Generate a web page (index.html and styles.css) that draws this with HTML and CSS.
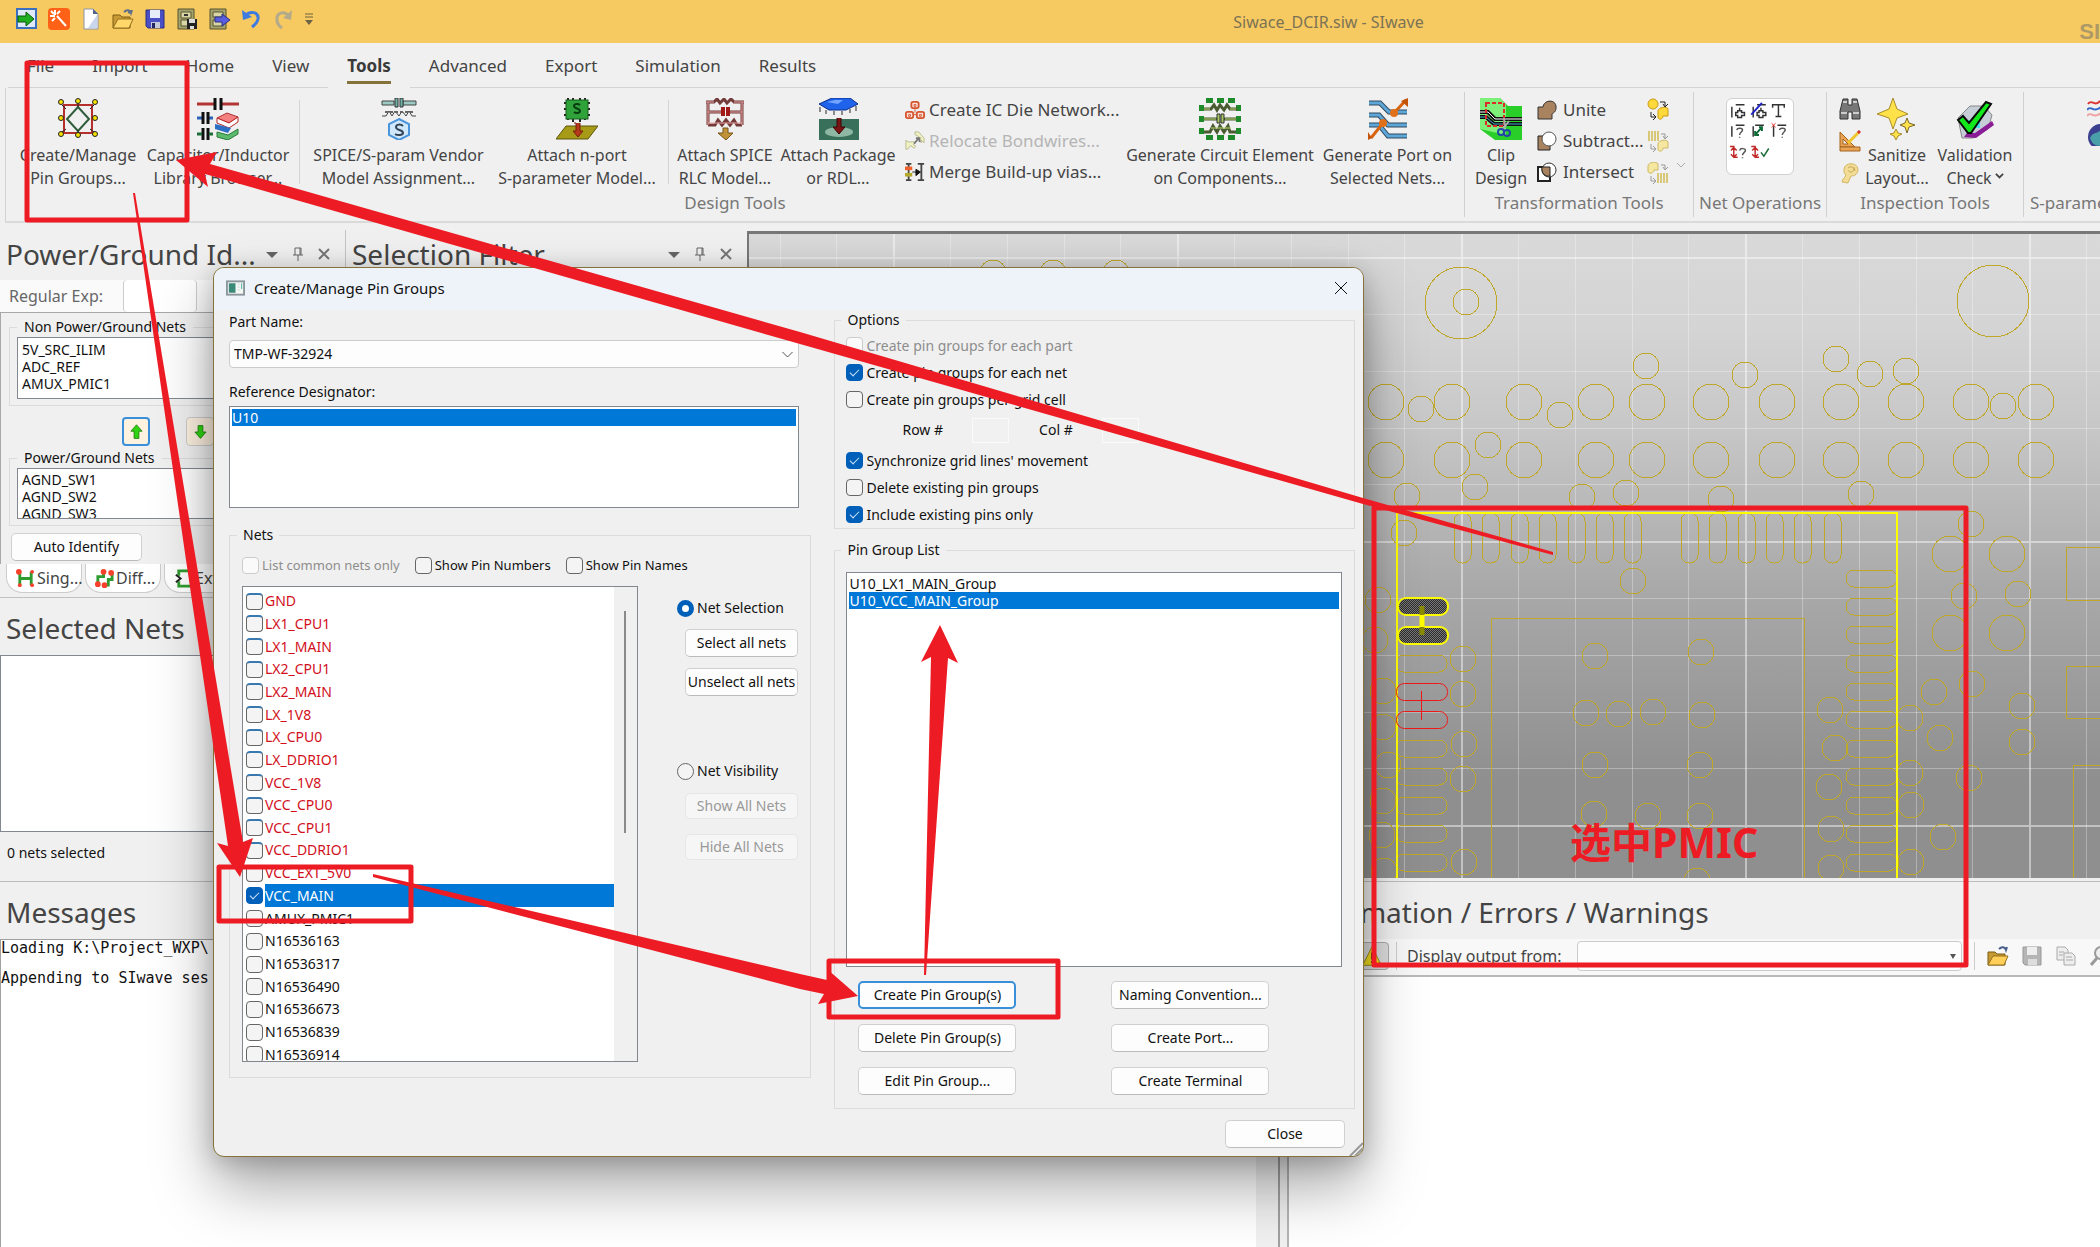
FILE: index.html
```html
<!DOCTYPE html>
<html lang="en">
<head>
<meta charset="utf-8">
<title>Siwace_DCIR.siw - SIwave</title>
<link rel="stylesheet" href="styles.css">
</head>
<body>
<header class="titlebar">
  <div class="quick">
    <button aria-label="Launch"><svg viewBox="0 0 22 22"><rect x="1" y="1" width="19" height="19" fill="#dfe9f7" stroke="#3b6fc0" stroke-width="2"/><path d="M2 8h8V4l8 7-8 7v-4H2z" fill="#1fae1f" stroke="#0b5c0b"/></svg></button>
    <button aria-label="Wizard"><svg viewBox="0 0 22 22"><rect width="22" height="22" rx="4" fill="#ff6216"/><path d="M9 8l9 10M7 2v5M2 8h5M3 3l3 3M12 3L9 6M4 13l3-3" stroke="#fff" stroke-width="2" fill="none"/></svg></button>
    <button aria-label="New"><svg viewBox="0 0 22 22"><path d="M4 1h9l5 5v15H4z" fill="#fff" stroke="#8a93a5"/><path d="M13 1v5h5z" fill="#50648c"/><path d="M17 7v13H8z" fill="#c9d6ee"/></svg></button>
    <button aria-label="Open"><svg viewBox="0 0 22 22"><path d="M1 7h7l2 2h8v11H1z" fill="#c79a35" stroke="#7d5b12"/><path d="M1 20l5-9h15l-4 9z" fill="#ffd76a" stroke="#94701f"/><path d="M12 4c3-3 6-2 7 1l1-3M19 5l-3-1" stroke="#5d6e8c" stroke-width="2" fill="none"/></svg></button>
    <button aria-label="Save"><svg viewBox="0 0 22 22"><path d="M2 2h18v18H4l-2-2z" fill="#4a4fc4" stroke="#2a2e80"/><path d="M6 2h10v8H6z" fill="#e6ecf8"/><path d="M7 14h9v6H7z" fill="#c5c9d8"/><path d="M8 15h3v5H8z" fill="#222764"/></svg></button>
    <button aria-label="Archive"><svg viewBox="0 0 22 22"><path d="M2 1h16v20H2z" fill="#a5a36d" stroke="#56552f"/><path d="M5 4h10v6H5zM5 12h10v6H5z" fill="#d8d6a5" stroke="#56552f"/><path d="M8 7h4" stroke="#333" stroke-width="2"/><path d="M11 11h10v10H11z" fill="#222"/><path d="M13 11h6v4h-6zM14 18h4v3h-4z" fill="#ddd"/></svg></button>
    <button aria-label="Restore archive"><svg viewBox="0 0 22 22"><path d="M2 1h16v20H2z" fill="#a5a36d" stroke="#56552f"/><path d="M5 4h10v5H5zM5 12h10v6H5z" fill="#d8d6a5" stroke="#56552f"/><path d="M7 9h7V6l8 6-8 6v-4H7z" fill="#5a5fe0" stroke="#2c2f86"/></svg></button>
    <button aria-label="Undo"><svg viewBox="0 0 22 22"><path d="M5 8c5-6 14-4 13 3-1 4-3 6-6 8" fill="none" stroke="#3d7be0" stroke-width="3"/><path d="M2 2l1 10 9-3z" fill="#3d7be0"/></svg></button>
    <button aria-label="Redo"><svg viewBox="0 0 22 22"><path d="M17 8c-5-6-13-3-12 4 0 4 2 6 5 8" fill="none" stroke="#b3aa8c" stroke-width="3"/><path d="M20 2l-1 10-8-2z" fill="#b3aa8c"/></svg></button>
    <button class="more" aria-label="Customize"><svg viewBox="0 0 10 12"><path d="M1 1h8M1 4h8" stroke="#6d6447"/><path d="M1 7h8l-4 5z" fill="#6d6447"/></svg></button>
  </div>
  <h1 class="doc-title">Siwace_DCIR.siw - SIwave</h1>
  <span class="brand">SI</span>
</header>

<nav class="tabs">
  <a href="#">File</a><a href="#">Import</a><a href="#">Home</a><a href="#">View</a><a href="#" class="on" aria-current="page">Tools</a><a href="#">Advanced</a><a href="#">Export</a><a href="#">Simulation</a><a href="#">Results</a>
</nav>

<section class="ribbon">
  <div class="group design">
    <div class="tools">
      <button class="big"><svg viewBox="0 0 42 42"><rect x="7" y="7" width="28" height="28" fill="none" stroke="#b5302c" stroke-width="2"/><path d="M21 9l11 12-11 12L10 21z" fill="none" stroke="#2f5c3c" stroke-width="2"/><g fill="#f5e000" stroke="#222"><circle cx="4" cy="4" r="2.500"/><circle cx="21" cy="3" r="2.500"/><circle cx="38" cy="4" r="2.500"/><circle cx="4" cy="20" r="2.500"/><circle cx="38" cy="20" r="2.500"/><circle cx="4" cy="36" r="2.500"/><circle cx="21" cy="37" r="2.500"/><circle cx="38" cy="36" r="2.500"/></g><path d="M5 7l4 4M37 7l-4 4M5 34l4-3M37 34l-4-3M21 5v4M21 35v-3" stroke="#222"/></svg><span>Create/Manage<br>Pin Groups...</span></button>
      <button class="big"><svg viewBox="0 0 42 42"><path d="M0 6h18M25 6h17" stroke="#b23434" stroke-width="3"/><path d="M18 0v12M24 0v12" stroke="#111" stroke-width="3"/><path d="M0 20h5M12 20h4" stroke="#2b63b8" stroke-width="3"/><path d="M6 14v12M11 14v12M6 30v12M11 30v12" stroke="#111" stroke-width="3"/><path d="M0 36h5M12 36h4" stroke="#1d6e3a" stroke-width="3"/><path d="M20 20l10-5 11 4-9 6z" fill="#f58080" stroke="#a33"/><path d="M20 20v5l12 5 9-6v-5l-9 6z" fill="#fff" stroke="#b22"/><path d="M18 26v5l13 4 3-5z" fill="#2e6fc6"/><path d="M20 34l11 3 10-6v5l-10 6-11-3z" fill="#5cba6b" stroke="#2b7a3a"/></svg><span>Capacitor/Inductor<br>Library Browser...</span></button>
      <i class="sep"></i>
      <button class="big"><svg viewBox="0 0 34 42"><path d="M0 3h12v4H0zM21 3h13v4H21z" fill="#9ccbc4" stroke="#444"/><path d="M13 0h3v9h-3zM18 0h3v9h-3z" fill="#6fb5a8" stroke="#333"/><path d="M0 18h4l3-5 3 5 3-5 4 5 3-5 4 5 3-5 3 5h4" stroke="#444" fill="none"/><path d="M3 14h28" stroke="#666" stroke-width="2" stroke-dasharray="3 2"/><path d="M17 21l10 5v11l-10 5-10-5V26z" fill="#cfe8fc" stroke="#4a94dc" stroke-width="2"/><path d="M21 28c-2-2-7-2-7 1 0 4 7 2 7 6 0 2-5 3-8 1" fill="none" stroke="#345" stroke-width="2"/></svg><span>SPICE/S-param Vendor<br>Model Assignment...</span></button>
      <button class="big"><svg viewBox="0 0 42 42"><path d="M12 0v22M17 0v24M24 0v24M29 0v22M8 5h26M8 11h26M8 17h26" stroke="#222" stroke-width="2"/><rect x="10" y="2" width="22" height="19" fill="#2fa33a" stroke="#155d1d"/><path d="M24 7c-2-2-6-1-6 1 0 3 6 2 6 5 0 2-4 3-6 1" fill="none" stroke="#0b3d12" stroke-width="2"/><path d="M10 28h32l-10 13H0z" fill="#a79a17" stroke="#5d560d"/><path d="M18 25h2v8h-3l5 6 5-6h-3v-8" fill="#b5391b" stroke="#7a1f0c"/></svg><span>Attach n-port<br>S-parameter Model...</span></button>
      <i class="sep"></i>
      <button class="big"><svg viewBox="0 0 42 42"><g fill="none" stroke="#733a3a" stroke-width="3"><path d="M2 4h8l3-3 3 4 4-4 3 4 4-4 3 3h10M4 4v23M38 4v23M4 14h14M25 14h13M4 27h7l3-5 4 5 4-5 4 5 4-5 3 5h5"/></g><g fill="none" stroke="#eba5a5"><path d="M2 4h8M30 4h10M4 4v23M38 4v23M4 14h14M25 14h13M4 25h34"/></g><path d="M19 9v9M24 9v9" stroke="#a01818" stroke-width="4"/><path d="M19 30v5h-5l8 7 7-7h-5v-5z" fill="#c09137" stroke="#75551a"/></svg><span>Attach SPICE<br>RLC Model...</span></button>
      <button class="big"><svg viewBox="0 0 42 42"><path d="M2 21h40v21H2z" fill="#39705c"/><ellipse cx="22" cy="34" rx="14" ry="5" fill="#8fb8a4"/><path d="M2 6l13-6h18l8 6-12 6H12z" fill="#1f63ea" stroke="#0b2e8c"/><path d="M10 4l8-2h8l-5 4z" fill="#73a5ff"/><path d="M3 9v5M9 12v4M17 13v4M25 13v4M33 11v4M39 8v5" stroke="#8b8b8b" stroke-width="2"/><path d="M20 20v9h-4l6 7 6-7h-4v-9" fill="#7b1414" stroke="#3c0505"/></svg><span>Attach Package<br>or RDL...</span></button>
      <div class="stack">
        <button class="row"><svg viewBox="0 0 22 20"><g fill="#fbe3da" stroke="#d6552f" stroke-width="2"><rect x="7" y="1" width="8" height="7" rx="2"/><rect x="1" y="12" width="8" height="7" rx="2"/><rect x="13" y="12" width="8" height="7" rx="2"/></g><path d="M11 8v5M9 15h4M10 4h2v2h-2zM4 15h2v2H4zM16 15h2v2h-2z" fill="none" stroke="#d6552f"/></svg>Create IC Die Network...</button>
        <button class="row" disabled><svg viewBox="0 0 22 22"><path d="M11 1h4l6 7v5l-3-3v3l-3-3v-4l-4-2z" fill="#f1f2c4" stroke="#b6b88c"/><path d="M1 10l2 2h9l-3 3 3 2-2 2-4-3-3 4H1z" fill="#f1f2c4" stroke="#b6b88c"/><path d="M10 14l5-6M12 8h4v4" fill="none" stroke="#777" stroke-width="2"/></svg>Relocate Bondwires...</button>
        <button class="row"><svg viewBox="0 0 22 20"><path d="M1 1h6M1 19h6M4 1v18M14 1h7M14 19h7M18 1v18" stroke="#444" stroke-width="2"/><path d="M0 6h8" stroke="#f0602d" stroke-width="4"/><path d="M0 13h8" stroke="#b4a92a" stroke-width="4"/><path d="M8 10h4V7l5 3-5 4v-4" fill="#111" stroke="#111"/></svg>Merge Build-up vias...</button>
      </div>
      <button class="big"><svg viewBox="0 0 42 42"><g fill="#1f8a2a"><path d="M7 0h7v5H7zM18 0h7v5h-7zM29 0h7v5h-7zM7 37h7v5H7zM18 37h7v5h-7zM29 37h7v5h-7zM0 7h5v6H0zM37 7h5v6h-5zM0 18h5v6H0zM37 18h5v6h-5zM0 30h5v6H0zM37 30h5v6h-5z"/></g><path d="M5 11h7l3-4 3 5 3-5 4 5 3-5 3 4h7M5 21h13M25 21h12M5 34h6l3-6 4 6 3-6 4 6 4-6 2 6h6" fill="none" stroke="#4a5b32" stroke-width="3"/><path d="M5 11h6M31 11h6M5 21h12M26 21h11M12 30h20" fill="none" stroke="#b9d96f"/><path d="M18 16h3v9h-3zM22 16h3v9h-3z" fill="#a5c765" stroke="#333"/></svg><span>Generate Circuit Element<br>on Components...</span></button>
      <button class="big"><svg viewBox="0 0 42 42"><g fill="none" stroke="#33495e" stroke-width="5"><path d="M2 5h11l9 9h18M2 17h10l9 10h19M2 27h10l9 11h19"/></g><g fill="none" stroke="#5da7d8" stroke-width="3"><path d="M2 5h11l9 9h18M2 17h10l9 10h19M2 27h10l9 11h19"/></g><path d="M27 15L39 2M16 25L4 40" stroke="#d9640f" stroke-width="3"/><circle cx="27" cy="15" r="4" fill="#e0701a"/><circle cx="16" cy="25" r="4" fill="#e0701a"/><path d="M34 3l7-3v9zM1 34v8l4-2z" fill="#c3540a"/></svg><span>Generate Port on<br>Selected Nets...</span></button>
    </div>
    <h2>Design Tools</h2>
  </div>
  <div class="group transform">
    <div class="tools">
      <button class="big"><svg viewBox="0 0 42 42"><path d="M0 0h20l8 8h14v34H15L0 31z" fill="#29cf28"/><path d="M0 0h20l6 7v30L0 31z" fill="#7ef07a"/><path d="M0 14h8l7 7h27M0 19h6l8 7h28" stroke="#111" stroke-width="4" fill="none"/><path d="M0 14h8l7 7h27" stroke="#fff" fill="none"/><path d="M0 19h6l8 7h28" stroke="#3fa8c8" fill="none"/><path d="M6 5h18v23H6z" fill="none" stroke="#e02a2a" stroke-width="2" stroke-dasharray="4 2"/><path d="M24 20l1 10M29 23l-6 8" stroke="#aaa" stroke-width="2"/><circle cx="21" cy="34" r="3" fill="none" stroke="#2344a8" stroke-width="2"/><circle cx="27" cy="35" r="3" fill="none" stroke="#2344a8" stroke-width="2"/></svg><span>Clip<br>Design</span></button>
      <div class="stack">
        <button class="row"><svg viewBox="0 0 20 20"><path d="M1 7h5c1-8 14-8 13 1 0 4-3 5-4 6v5H1z" fill="#a9825f" stroke="#333"/></svg>Unite</button>
        <button class="row"><svg viewBox="0 0 20 20"><path d="M1 5h12v14H1z" fill="#a9825f" stroke="#222"/><circle cx="12" cy="8" r="7" fill="#fff" stroke="#555"/></svg>Subtract...</button>
        <button class="row"><svg viewBox="0 0 20 20"><path d="M1 5h12v14H1z" fill="#fff" stroke="#222" stroke-width="2"/><circle cx="12" cy="8" r="7" fill="#fff" stroke="#333"/><path d="M5 5h8v9c-5 1-9-3-8-9" fill="#a9825f" stroke="#222"/></svg>Intersect</button>
      </div>
      <div class="stack icons">
        <button aria-label="Circle to polygon"><svg viewBox="0 0 22 22"><circle cx="6" cy="6" r="5" fill="#ffd83b" stroke="#c99a12"/><path d="M11 13c0-4 9-5 10-2v7h-5c0 4-5 4-5 1z" fill="#ffd83b" stroke="#c99a12"/><path d="M13 4h5v4M16 6l2 3 3-3M4 14v5h4M6 16l3 3-3 3" fill="none" stroke="#222"/></svg></button>
        <button aria-label="Trace to polygon" disabled><svg viewBox="0 0 22 22"><path d="M2 1v10M5 1v10M8 1v10M11 1v10" stroke="#d8c777" stroke-width="2"/><path d="M11 14c0-4 9-5 10-2v6h-5c0 4-5 4-5 1z" fill="#f5e6a0" stroke="#cdb965"/><path d="M14 4h4v4M16 6l2 3 3-3M4 14v5h4M6 16l3 3-3 3" fill="none" stroke="#999"/></svg></button>
        <button aria-label="Polygon to trace" disabled><svg viewBox="0 0 22 22"><path d="M1 4c0-4 9-5 10-2v6H7c0 4-6 4-6 1z" fill="#f5e6a0" stroke="#cdb965"/><path d="M11 11v10M14 11v10M17 11v10M20 11v10" stroke="#d8c777" stroke-width="2"/><path d="M14 3h4v4M16 5l2 3 3-3M4 14v5h4M6 16l3 3-3 3" fill="none" stroke="#999"/></svg></button>
      </div>
      <button class="drop" aria-label="More" disabled><svg viewBox="0 0 10 10"><path d="M1 3l4 4 4-4" fill="none" stroke="#aaa"/></svg></button>
    </div>
    <h2>Transformation Tools</h2>
  </div>
  <div class="group netops">
    <div class="tools">
      <button class="gallery" aria-label="Net operations"><svg viewBox="0 0 68 77"><g fill="none" stroke="#333" stroke-width="1.500"><path d="M5 8v11M9 6h9M13 9v3M11 12h4v2h3v3h-3v2h-4v-2H9v-3h2zM27 8v11M31 6h9M35 9v3M33 12h4v2h3v3h-3v2h-4v-2h-2v-3h2z"/><path d="M47 9V6h12v3M53 6v12M50 18h6"/><path d="M5 28v11M9 27h9M27 28v11M29 27h9M48 28v11M52 27h9"/></g><path d="M10 32c1-3 6-2 6 0s-3 2-3 5M13 39v1M54 32c1-3 6-2 6 0s-3 2-3 5M57 39v1M13 53c1-3 6-2 6 0s-3 2-3 5M16 60v1" fill="none" stroke="#555" stroke-width="1.500"/><path d="M25 16L36 4" stroke="#22c" stroke-width="2"/><path d="M29 37l7-8M29 33v4h4M33 29h3v4" stroke="#0a6b35" stroke-width="2" fill="none"/><path d="M46 25l4 4M50 25l-4 4" stroke="#d22"/><path d="M3 49h4v11h4M25 49h4v11h4M4 53l3-3 3 3M4 57l3 3 3-3M26 53l3-3 3 3M26 57l3 3 3-3" fill="none" stroke="#c22a2a" stroke-width="1.500"/><path d="M35 55l3 4 5-8" fill="none" stroke="#1a6b35" stroke-width="1.500"/></svg></button>
    </div>
    <h2>Net Operations</h2>
  </div>
  <div class="group inspect">
    <div class="tools">
      <div class="stack icons">
        <button aria-label="Find"><svg viewBox="0 0 22 22"><path d="M4 1h5v6h4V1h5l3 12v8h-8v-7H9v7H1v-8z" fill="#777" stroke="#333"/><path d="M2 15h6M14 15h6M4 4h4M14 4h4" stroke="#ccc" stroke-width="2"/></svg></button>
        <button aria-label="Measure"><svg viewBox="0 0 22 22"><path d="M1 2v15h15zM4 9l5 5H4z" fill="#e8a355" fill-rule="evenodd" stroke="#a5631f"/><path d="M1 17h20v4H1z" fill="#e8a355" stroke="#a5631f"/><path d="M9 13L20 2" stroke="#f0c62c" stroke-width="3"/><path d="M19 3l2-2" stroke="#c33" stroke-width="3"/></svg></button>
        <button aria-label="Note"><svg viewBox="0 0 22 22"><path d="M5 7C6 0 18 0 19 7c0 5-3 7-7 7l-3 7-6-1c0-3 3-4 4-7-2-1-2-3-2-6z" fill="#f3dc95" stroke="#d3b767"/><path d="M9 6c3-3 7 0 5 3-2 2-4 1-5-1M15 5l1 4" fill="none" stroke="#c3a658"/></svg></button>
      </div>
      <button class="big"><svg viewBox="0 0 42 42"><path d="M17 0l4 11 11 5-11 4-4 11-4-11-12-4 12-5z" fill="#ffe14a" stroke="#a98d2c"/><path d="M31 20l2 5 6 2-6 2-2 6-2-6-5-2 5-2z" fill="#ffe14a" stroke="#7d6a2b"/><path d="M20 31l2 4 4 1-4 2-2 4-2-4-4-2 4-1z" fill="#ffe14a" stroke="#a98d2c"/></svg><span>Sanitize<br>Layout...</span></button>
      <button class="big"><svg viewBox="0 0 42 42"><path d="M4 20l12-12h14l8 9-4 14-15 9H8z" fill="#c7cdd6" stroke="#888"/><path d="M38 23l2 4-18 13-12-1 3-4h8z" fill="#8a1c96"/><path d="M12 22h14v8H12z" fill="#49e0ee"/><path d="M4 22l5-4 6 7L32 4l5 2-20 29h-3z" fill="#12e81b" stroke="#0a0a0a" stroke-width="2"/></svg><span>Validation<br>Check<svg class="chev" viewBox="0 0 10 10"><path d="M1 2l4 4 4-4" fill="none" stroke="#444" stroke-width="2"/></svg></span></button>
    </div>
    <h2>Inspection Tools</h2>
  </div>
  <div class="group sparam">
    <div class="tools">
      <svg viewBox="0 0 14 48"><path d="M1 6c4-6 6 4 12-3" stroke="#d33" stroke-width="2" fill="none"/><path d="M0 12c4-6 6 4 14-3" stroke="#36c" stroke-width="2" fill="none"/><path d="M0 18c4-6 6 4 14-3" stroke="#f0a0a0" stroke-width="2" fill="none"/><circle cx="14" cy="39" r="13" fill="#3b3f8f"/><path d="M3 40c3-7 8-3 11-9v17C8 48 5 46 3 40" fill="#49a0a8"/></svg>
    </div>
    <h2>S-parameters</h2>
  </div>
</section>

<main class="work">
  <div class="docks">
    <div class="dock-row">
      <section class="panel ident">
        <header class="caption"><h2>Power/Ground Id...</h2><span class="ctl"><svg viewBox="0 0 12 14"><path d="M0 5h12l-6 6z" fill="#666"/></svg><svg viewBox="0 0 12 14"><path d="M3 1h6v7M3 1v7M1 8h10M6 8v6M8 1v7" fill="none" stroke="#666"/></svg><svg viewBox="0 0 12 14"><path d="M1 2l10 10M11 2L1 12" stroke="#777" stroke-width="2"/></svg></span></header>
        <div class="regexp"><label for="re">Regular Exp:</label><input id="re" type="text"></div>
        <div class="ident-body">
          <fieldset><legend>Non Power/Ground Nets</legend><ul class="list nets-a"><li>5V_SRC_ILIM</li><li>ADC_REF</li><li>AMUX_PMIC1</li></ul></fieldset>
          <div class="move"><button class="focus" aria-label="Move up"><svg viewBox="0 0 16 20"><path d="M8 1l7 8h-4v9H5V9H1z" fill="#2fd312" stroke="#187a0a"/></svg></button><button aria-label="Move down"><svg viewBox="0 0 16 20"><path d="M8 18l7-8h-4V2H5v8H1z" fill="#2fd312" stroke="#187a0a"/></svg></button></div>
          <fieldset><legend>Power/Ground Nets</legend><ul class="list nets-b"><li>AGND_SW1</li><li>AGND_SW2</li><li>AGND_SW3</li></ul></fieldset>
          <button class="btn auto">Auto Identify</button>
        </div>
        <div class="dock-tabs">
          <a href="#"><svg viewBox="0 0 20 20"><path d="M4 2v15M4 10h12M16 3v14" stroke="#2e9b2e" stroke-width="3" fill="none"/><g fill="#f5402c"><circle cx="3" cy="3" r="3"/><circle cx="4" cy="17" r="2"/><circle cx="17" cy="3" r="2"/><circle cx="17" cy="17" r="2"/></g></svg>Sing...</a>
          <a href="#"><svg viewBox="0 0 20 20"><path d="M3 16V8h6V3M9 17h5v-6h4V4" stroke="#2e9b2e" stroke-width="3" fill="none"/><g fill="#f5402c"><circle cx="9" cy="3" r="3"/><circle cx="17" cy="4" r="3"/><circle cx="3" cy="16" r="3"/><circle cx="10" cy="17" r="3"/></g></svg>Diff...</a>
          <a href="#"><svg viewBox="0 0 20 20"><path d="M18 2H5v5M5 13v5h13" stroke="#2e9b2e" stroke-width="3" fill="none"/><path d="M2 6l5 4-5 4" stroke="#222" stroke-width="2" fill="none"/></svg>Ext...</a>
        </div>
      </section>
      <section class="panel filter">
        <header class="caption"><h2>Selection Filter</h2><span class="ctl"><svg viewBox="0 0 12 14"><path d="M0 5h12l-6 6z" fill="#666"/></svg><svg viewBox="0 0 12 14"><path d="M3 1h6v7M3 1v7M1 8h10M6 8v6M8 1v7" fill="none" stroke="#666"/></svg><svg viewBox="0 0 12 14"><path d="M1 2l10 10M11 2L1 12" stroke="#777" stroke-width="2"/></svg></span></header>
      </section>
    </div>
    <section class="panel selected">
      <h2 class="plain">Selected Nets</h2>
      <div class="sel-list"></div>
      <p class="count">0 nets selected</p>
    </section>
  </div>
  <section class="canvas">
    <svg viewBox="749 234 1351 644" preserveAspectRatio="xMinYMin slice">
      <defs>
        <linearGradient id="bg" x1="0" y1="0" x2="0" y2="1"><stop offset="0" stop-color="#d9d9d9"/><stop offset=".15" stop-color="#d4d4d4"/><stop offset=".3" stop-color="#c7c7c7"/><stop offset=".55" stop-color="#a9a9a9"/><stop offset=".85" stop-color="#8f8f8f"/><stop offset="1" stop-color="#8f8f8f"/></linearGradient>
        <pattern id="grid" x="1461" y="257" width="284" height="284" patternUnits="userSpaceOnUse"><path d="M57.500 0v284M114.500 0v284M171.500 0v284M227.500 0v284M0 57.500h284M0 114.500h284M0 171.500h284M0 227.500h284" stroke="#fff" stroke-opacity=".3"/><path d="M1 0v284M0 1h284" stroke="#fff" stroke-opacity=".45" stroke-width="2"/></pattern>
        <pattern id="hatch" width="2" height="2" patternUnits="userSpaceOnUse"><path d="M0 0h2v2H0z" fill="#2c2c2c"/><path d="M0 0h1v1H0zM1 1h1v1H1z" fill="#777"/></pattern>
      </defs>
      <path d="M749 234h3000v644H749z" fill="url(#bg)"/>
      <path d="M749 234h3000v644H749z" fill="url(#grid)"/>
      <g class="pad">
        <circle cx="1461" cy="303" r="36"/><circle cx="1466" cy="302" r="13"/><circle cx="1993" cy="301" r="36"/>
        <circle cx="993" cy="273" r="13"/><circle cx="1053" cy="273" r="13"/><circle cx="1116" cy="273" r="13"/>
        <circle cx="1386" cy="402" r="18"/><circle cx="1452" cy="402" r="18"/><circle cx="1524" cy="402" r="18"/><circle cx="1596" cy="402" r="18"/><circle cx="1647" cy="402" r="18"/><circle cx="1711" cy="402" r="18"/><circle cx="1777" cy="402" r="18"/><circle cx="1841" cy="402" r="18"/><circle cx="1906" cy="402" r="18"/><circle cx="1971" cy="402" r="18"/><circle cx="2036" cy="402" r="18"/>
        <circle cx="1386" cy="460" r="18"/><circle cx="1452" cy="460" r="18"/><circle cx="1524" cy="460" r="18"/><circle cx="1596" cy="460" r="18"/><circle cx="1647" cy="460" r="18"/><circle cx="1711" cy="460" r="18"/><circle cx="1777" cy="460" r="18"/><circle cx="1841" cy="460" r="18"/><circle cx="1906" cy="460" r="18"/><circle cx="1971" cy="460" r="18"/><circle cx="2036" cy="460" r="18"/>
        <circle cx="1950" cy="554" r="18"/><circle cx="2007" cy="554" r="18"/><circle cx="1950" cy="633" r="18"/><circle cx="2007" cy="633" r="18"/>
        <circle cx="1421" cy="409" r="13"/><circle cx="1560" cy="415" r="13"/><circle cx="2003" cy="406" r="13"/><circle cx="1646" cy="366" r="13"/><circle cx="1745" cy="375" r="13"/><circle cx="1836" cy="359" r="13"/><circle cx="1870" cy="374" r="13"/><circle cx="1906" cy="371" r="13"/><circle cx="1488" cy="445" r="13"/><circle cx="1475" cy="487" r="13"/><circle cx="1407" cy="496" r="13"/><circle cx="1582" cy="497" r="13"/><circle cx="1626" cy="493" r="13"/><circle cx="1721" cy="499" r="13"/><circle cx="1861" cy="494" r="13"/><circle cx="1404" cy="533" r="13"/><circle cx="1633" cy="581" r="13"/><circle cx="1378" cy="600" r="13"/><circle cx="1971" cy="524" r="13"/><circle cx="1964" cy="596" r="13"/><circle cx="2018" cy="594" r="13"/>
        <circle cx="1375" cy="640" r="13"/><circle cx="1463" cy="659" r="13"/><circle cx="1463" cy="694" r="13"/><circle cx="1383" cy="691" r="13"/><circle cx="1383" cy="727" r="13"/><circle cx="1464" cy="744" r="13"/><circle cx="1463" cy="779" r="13"/><circle cx="1388" cy="765" r="13"/><circle cx="1383" cy="801" r="13"/><circle cx="1382" cy="835" r="13"/><circle cx="1464" cy="862" r="13"/><circle cx="1384" cy="871" r="13"/>
        <circle cx="1595" cy="656" r="13"/><circle cx="1701" cy="652" r="13"/><circle cx="1586" cy="713" r="13"/><circle cx="1619" cy="714" r="13"/><circle cx="1653" cy="712" r="13"/><circle cx="1702" cy="715" r="13"/><circle cx="1595" cy="765" r="13"/><circle cx="1700" cy="765" r="13"/><circle cx="1594" cy="814" r="13"/><circle cx="1648" cy="816" r="13"/><circle cx="1700" cy="816" r="13"/><circle cx="1697" cy="881" r="13"/>
        <circle cx="1830" cy="710" r="13"/><circle cx="1835" cy="748" r="13"/><circle cx="1829" cy="787" r="13"/><circle cx="1831" cy="829" r="13"/><circle cx="1831" cy="868" r="13"/><circle cx="1910" cy="718" r="13"/><circle cx="1910" cy="773" r="13"/><circle cx="1911" cy="805" r="13"/><circle cx="1911" cy="862" r="13"/><circle cx="1934" cy="692" r="13"/><circle cx="1940" cy="738" r="13"/><circle cx="1972" cy="684" r="13"/><circle cx="2022" cy="706" r="13"/><circle cx="2022" cy="742" r="13"/><circle cx="1969" cy="778" r="13"/><circle cx="1943" cy="837" r="13"/>
        <rect x="1454" y="513" width="17" height="50" rx="8"/><rect x="1482" y="513" width="17" height="50" rx="8"/><rect x="1511" y="513" width="17" height="50" rx="8"/><rect x="1539" y="513" width="17" height="50" rx="8"/><rect x="1568" y="513" width="17" height="50" rx="8"/><rect x="1596" y="513" width="17" height="50" rx="8"/><rect x="1624" y="513" width="17" height="50" rx="8"/><rect x="1681" y="513" width="17" height="50" rx="8"/><rect x="1709" y="513" width="17" height="50" rx="8"/><rect x="1738" y="513" width="17" height="50" rx="8"/><rect x="1766" y="513" width="17" height="50" rx="8"/><rect x="1794" y="513" width="17" height="50" rx="8"/><rect x="1824" y="513" width="17" height="50" rx="8"/>
        <rect x="1846" y="570" width="51" height="17" rx="8"/><rect x="1846" y="598" width="51" height="17" rx="8"/><rect x="1846" y="626" width="51" height="17" rx="8"/><rect x="1846" y="655" width="51" height="17" rx="8"/><rect x="1846" y="683" width="51" height="17" rx="8"/><rect x="1846" y="711" width="51" height="17" rx="8"/><rect x="1846" y="740" width="51" height="17" rx="8"/><rect x="1846" y="768" width="51" height="17" rx="8"/><rect x="1846" y="797" width="51" height="17" rx="8"/><rect x="1846" y="825" width="51" height="17" rx="8"/><rect x="1846" y="854" width="51" height="17" rx="8"/>
        <rect x="1396" y="655" width="51" height="17" rx="8"/><rect x="1396" y="740" width="51" height="17" rx="8"/><rect x="1396" y="768" width="51" height="17" rx="8"/><rect x="1396" y="797" width="51" height="17" rx="8"/><rect x="1396" y="825" width="51" height="17" rx="8"/><rect x="1396" y="854" width="51" height="17" rx="8"/>
        <path d="M1491 880V618h313v262M2200 547.500H2066.500v53H2200M2200 666.500H2066.500v52H2200M2200 765.500H2073V880"/>
      </g>
      <path d="M1397 880V513H1897v367" fill="none" stroke="#ff0" stroke-width="2"/>
      <g fill="url(#hatch)" stroke="#ff0" stroke-width="2"><rect x="1398" y="598" width="50" height="17" rx="8"/><rect x="1398" y="627" width="50" height="17" rx="8"/></g>
      <path d="M1422 615v12" stroke="#ff0" stroke-width="5"/><path d="M1422 606v9M1422 627v8" stroke="#8b8b00" stroke-width="5"/>
      <g fill="none" stroke="#f01818"><rect x="1396.500" y="683.500" width="51" height="17" rx="8"/><rect x="1396.500" y="711.500" width="51" height="17" rx="8"/><path d="M1421.500 691v29"/></g>
    </svg>
  </section>
</main>

<section class="output">
  <section class="messages">
    <h2 class="plain">Messages</h2>
    <div class="log"><pre>Loading K:\Project_WXP\

Appending to SIwave ses</pre><i class="track"></i></div>
  </section>
  <section class="errors">
    <h2 class="plain">Information / Errors / Warnings</h2>
    <div class="outbar">
      <button class="warn" aria-label="Warnings"><svg viewBox="0 0 26 26"><path d="M13 2l11 22H2z" fill="#f4e01c" stroke="#8a7d10"/><path d="M13 9v8M13 19v2" stroke="#222" stroke-width="2"/></svg></button>
      <i class="vline"></i>
      <label for="from">Display output from:</label>
      <span class="combo"><select id="from"><option></option></select><svg viewBox="0 0 8 6"><path d="M1 0h6L4 5z" fill="#555"/></svg></span>
      <i class="vline"></i>
      <button aria-label="Open"><svg viewBox="0 0 22 22"><path d="M1 7h7l2 2h8v11H1z" fill="#c79a35" stroke="#7d5b12"/><path d="M1 20l5-9h15l-4 9z" fill="#ffcf5a" stroke="#94701f"/><path d="M12 4c3-3 6-2 7 1l1-3" stroke="#49608c" stroke-width="2" fill="none"/></svg></button>
      <button aria-label="Save" disabled><svg viewBox="0 0 22 22"><path d="M2 2h18v18H4l-2-2z" fill="#b5b5b5" stroke="#999"/><path d="M6 2h10v8H6z" fill="#eee"/><path d="M7 14h9v6H7z" fill="#ddd"/></svg></button>
      <button aria-label="Copy" disabled><svg viewBox="0 0 22 22"><path d="M2 2h8l3 3v10H2z" fill="#eee" stroke="#aaa"/><path d="M9 8h8l3 3v9H9z" fill="#eee" stroke="#aaa"/><path d="M11 12h6M11 15h7M4 7h5M4 10h4" stroke="#aaa"/></svg></button>
      <button aria-label="Find" disabled><svg viewBox="0 0 22 22"><circle cx="12" cy="8" r="6" fill="#eee" stroke="#999" stroke-width="2"/><path d="M8 13l-6 7" stroke="#999" stroke-width="3"/></svg></button>
    </div>
    <div class="outbody"></div>
  </section>
</section>

<div class="dialog" role="dialog" aria-labelledby="dlg-title">
  <header><svg viewBox="0 0 20 16"><rect x="1" y="1" width="18" height="14" fill="#f5f7f5" stroke="#8c979c" stroke-width="2"/><path d="M3 3h7v10H3z" fill="#3b8a78"/><path d="M12 4h3M12 7h3M12 10h3" stroke="#cdd"/><path d="M16 3h1v6h-1z" fill="#4ab0a0"/></svg><h2 id="dlg-title">Create/Manage Pin Groups</h2><button aria-label="Close dialog"><svg viewBox="0 0 14 14"><path d="M1 1l12 12M13 1L1 13" stroke="#111"/></svg></button></header>
  <div class="cols">
    <div class="left">
      <label class="lab" for="part">Part Name:</label>
      <span class="combo part"><select id="part"><option>TMP-WF-32924</option></select><svg viewBox="0 0 12 8"><path d="M1 1l5 5 5-5" fill="none" stroke="#555"/></svg></span>
      <span class="lab ref">Reference Designator:</span>
      <ul class="list refs" role="listbox" aria-label="Reference Designator"><li class="sel" role="option">U10</li></ul>
      <fieldset class="nets"><legend>Nets</legend>
        <div class="checks"><label class="off"><input type="checkbox" disabled>List common nets only</label><label><input type="checkbox">Show Pin Numbers</label><label><input type="checkbox">Show Pin Names</label></div>
        <div class="nets-body">
          <div class="netbox"><div class="netlist">
            <label class="red"><input type="checkbox"><span>GND</span></label>
            <label class="red"><input type="checkbox"><span>LX1_CPU1</span></label>
            <label class="red"><input type="checkbox"><span>LX1_MAIN</span></label>
            <label class="red"><input type="checkbox"><span>LX2_CPU1</span></label>
            <label class="red"><input type="checkbox"><span>LX2_MAIN</span></label>
            <label class="red"><input type="checkbox"><span>LX_1V8</span></label>
            <label class="red"><input type="checkbox"><span>LX_CPU0</span></label>
            <label class="red"><input type="checkbox"><span>LX_DDRIO1</span></label>
            <label class="red"><input type="checkbox"><span>VCC_1V8</span></label>
            <label class="red"><input type="checkbox"><span>VCC_CPU0</span></label>
            <label class="red"><input type="checkbox"><span>VCC_CPU1</span></label>
            <label class="red"><input type="checkbox"><span>VCC_DDRIO1</span></label>
            <label class="red"><input type="checkbox"><span>VCC_EXT_5V0</span></label>
            <label class="sel"><input type="checkbox" checked><span>VCC_MAIN</span></label>
            <label><input type="checkbox"><span>AMUX_PMIC1</span></label>
            <label><input type="checkbox"><span>N16536163</span></label>
            <label><input type="checkbox"><span>N16536317</span></label>
            <label><input type="checkbox"><span>N16536490</span></label>
            <label><input type="checkbox"><span>N16536673</span></label>
            <label><input type="checkbox"><span>N16536839</span></label>
            <label><input type="checkbox"><span>N16536914</span></label>
          </div><div class="scroll"><i></i></div></div>
          <div class="modes">
            <label><input type="radio" name="mode" checked>Net Selection</label>
            <button class="btn">Select all nets</button>
            <button class="btn">Unselect all nets</button>
            <label class="second"><input type="radio" name="mode">Net Visibility</label>
            <button class="btn" disabled>Show All Nets</button>
            <button class="btn" disabled>Hide All Nets</button>
          </div>
        </div>
      </fieldset>
    </div>
    <div class="right">
      <fieldset class="options"><legend>Options</legend>
        <label class="off"><input type="checkbox" disabled>Create pin groups for each part</label>
        <label><input type="checkbox" checked>Create pin groups for each net</label>
        <label><input type="checkbox">Create pin groups per grid cell</label>
        <div class="cells"><label for="row">Row #</label><input id="row" type="text" disabled><label for="col">Col #</label><input id="col" type="text" disabled></div>
        <label><input type="checkbox" checked>Synchronize grid lines' movement</label>
        <label><input type="checkbox">Delete existing pin groups</label>
        <label><input type="checkbox" checked>Include existing pins only</label>
      </fieldset>
      <fieldset class="groups"><legend>Pin Group List</legend>
        <ul class="list" role="listbox" aria-label="Pin Group List"><li role="option">U10_LX1_MAIN_Group</li><li class="sel" role="option">U10_VCC_MAIN_Group</li></ul>
        <div class="actions">
          <button class="btn focus">Create Pin Group(s)</button><button class="btn">Naming Convention...</button>
          <button class="btn">Delete Pin Group(s)</button><button class="btn">Create Port...</button>
          <button class="btn">Edit Pin Group...</button><button class="btn">Create Terminal</button>
        </div>
      </fieldset>
      <button class="btn close">Close</button>
    </div>
  </div>
  <svg class="grip" viewBox="0 0 14 14"><path d="M1 14L14 1M6 14l8-8M11 14l3-3" stroke="#999" stroke-width="2"/></svg>
</div>

<svg class="notes" width="2100" height="1247" viewBox="0 0 2100 1247" aria-hidden="true">
  <g fill="none" stroke="#ed1c24" stroke-width="5" stroke-linejoin="round"><rect x="27" y="63" width="160" height="157"/><rect x="219" y="867" width="192" height="54"/><rect x="829" y="961" width="229" height="56"/><rect x="1374" y="508" width="592" height="457"/></g>
  <g fill="#ed1c24"><path d="M176 160l41-8-7 12 590 168 563 166 190 54v3l-190-51-563-160-595-170 3 13z"/><path d="M133 193h2l61 367 47 282 10-4-13 39-23-34 11 3-42-286z"/><path d="M373 874l427 100 27 6v-11l31 27-40 8 6-10-24-5-427-112z"/><path d="M924 975l7-318-10 5 19-37 18 38-10-5-22 317z"/></g>
</svg>
<p class="callout" lang="zh">选中PMIC</p>
</body>
</html>
```
FILE: styles.css
```css
* { box-sizing: border-box; }
:root {
  --ui: "Noto Sans", "Open Sans", sans-serif;
  --dlg: "Noto Sans", "DejaVu Sans", sans-serif;
  --face: #f0f0f0;
  --line: #d4d4d4;
  --blue: #0078d7;
}
body {
  margin: 0;
  min-height: 100vh;
  display: flex;
  flex-direction: column;
  position: relative;
  overflow: hidden;
  background: var(--face);
  font: 17px/22px var(--ui);
  color: #444;
}
h1, h2, p, ul, pre { margin: 0; padding: 0; font-weight: 400; }
ul { list-style: none; }
button { font: inherit; color: inherit; background: none; border: 0; padding: 0; }
svg { display: block; flex: none; }
a { color: inherit; text-decoration: none; }

/* title bar */
.titlebar { height: 43px; background: #f7c961; display: flex; align-items: center; }
.quick { display: flex; gap: 10px; padding: 0 0 6px 16px; flex: 9 1 0; }
.quick svg { width: 22px; height: 22px; }
.quick .more svg { width: 10px; height: 12px; }
.doc-title { font-size: 16px; color: #7b7355; }
.brand { flex: 5 1 0; text-align: right; font: bold 22px/22px "Liberation Sans", sans-serif; color: #ad9a66; padding: 21px 0 0; }

.tabs { height: 45px; display: flex; padding-left: 8px; }
.tabs a { padding: 12px 19px 0; height: 45px; border-bottom: 1px solid var(--line); }
.tabs a.on { font-weight: 700; color: #3a3a3a; border-bottom-color: transparent; }
.tabs a.on::after { content: ""; display: block; height: 3px; margin-top: 4px; background: #857238; }
.tabs::after { content: ""; flex: 1; border-bottom: 1px solid var(--line); }

/* ribbon */
.ribbon { height: 135px; margin-left: 5px; display: flex; border-left: 1px solid var(--line); border-bottom: 2px solid #dadada; overflow: hidden; }
.group { display: flex; flex-direction: column; justify-content: space-between; flex: none; margin: 4px 0; padding: 6px 0 3px; border-right: 1px solid #d0d0d0; }
.group h2 { font-size: 17px; text-align: center; color: #777; white-space: nowrap; }
.tools { display: grid; height: 92px; }
.big { display: flex; flex-direction: column; align-items: center; justify-content: space-between; white-space: nowrap; min-width: 0; font-size: 16px; line-height: 23px; }
.big > svg { height: 42px; width: 42px; }
.big span { margin: 4px -20px 0; }
.chev { display: inline-block; width: 9px; height: 9px; margin-left: 3px; vertical-align: 3px; }
.sep { width: 1px; margin: 2px 4px 6px auto; background: #d4d4d4; }
.stack { display: flex; flex-direction: column; justify-content: space-between; height: 86px; }
.row { display: flex; align-items: center; gap: 4px; height: 24px; white-space: nowrap; }
.row svg { width: 20px; height: 20px; }
.row:disabled { color: #b5b5b5; }
.stack.icons svg { width: 22px; height: 22px; }
.design { width: 1459px; }
.design .tools { grid-template-columns: 144px 136px 18px 189px 168px 12px 104px 122px 220px 202px 133px; }
.design .stack { padding-left: 6px; }
.transform { width: 229px; }
.transform .tools { grid-template-columns: 72px 110px 24px 20px; }
.transform .row { gap: 6px; }
.drop { align-self: end; padding: 0 0 20px 5px; }
.drop svg { width: 10px; height: 10px; }
.netops { width: 133px; }
.gallery { width: 68px; height: 77px; margin: 0 auto; background: #fff; border: 1px solid #d0d0d0; border-radius: 6px; }
.inspect { width: 197px; }
.inspect .tools { grid-template-columns: 22px 72px 84px; padding-left: 12px; }
.sparam { width: 140px; }
.sparam .tools { padding-left: 63px; }
.sparam .tools svg { width: 14px; height: 48px; }
.sparam h2 { text-align: left; padding-left: 6px; }

/* docked panels */
.work { height: 659px; display: flex; border-bottom: 1px solid #bdbdbd; }
.docks { width: 747px; display: flex; flex-direction: column; flex: none; }
.dock-row { display: flex; height: 375px; border-bottom: 1px solid #c0c0c0; }
.panel { min-width: 0; }
.ident { width: 345px; padding-top: 7px; }
.filter { flex: 1; margin-top: 7px; border-left: 1px solid #c4c4c4; }
.caption { height: 50px; display: flex; align-items: center; justify-content: space-between; padding: 0 15px 2px 6px; }
h2.plain, .caption h2 { font-size: 28px; line-height: 40px; white-space: nowrap; }
.ctl { display: flex; align-items: center; gap: 14px; }
.ctl svg { width: 12px; height: 14px; }
.regexp { display: flex; align-items: center; height: 32px; gap: 20px; padding-left: 9px; background: #fafafa; color: #666; font-size: 16px; }
.regexp input { width: 74px; height: 32px; border: 1px solid #ccc; border-width: 0 1px; border-radius: 4px; background: #fff; }
.ident-body { border: 1px solid #a8a8a8; border-width: 1px 0 0 1px; height: 252px; padding: 5px 8px 0; font: 14px/18px var(--dlg); color: #111; }
fieldset { margin: 0; padding: 0; border: 1px solid #dcdcdc; min-width: 0; }
legend { padding: 0 6px; margin-left: -5px; line-height: 18px; color: #111; }
.list { background: #fff; border: 1px solid #828790; overflow: hidden; color: #111; line-height: 17px; padding: 2px; }
.list li { height: 17px; }
.ident-body fieldset { padding: 0 7px 6px; }
.ident-body .list { padding: 3px 4px; margin-top: 1px; }
.ident-body legend { margin-left: 0; padding: 0 7px; }
.ident-body .nets-a { height: 62px; }
.ident-body .nets-b { height: 51px; padding-top: 2px; }
.move { display: flex; gap: 36px; padding: 11px 0 4px 113px; height: 43px; }
.move button { width: 28px; height: 29px; background: #fdf1e0; border: 1px solid #ccc; border-radius: 4px; display: grid; place-items: center; }
.move svg { width: 13px; height: 16px; }
.btn { height: 28px; background: #fdfdfd; border: 1px solid #d0d0d0; border-bottom-color: #bbb; border-radius: 5px; font: 14px/18px var(--dlg); color: #111; white-space: nowrap; text-align: center; }
.btn:disabled { color: #999; background: #f6f6f6; border-color: #e6e6e6; }
.focus, .move .focus { border: 2px solid #3a8fd9; }
.auto { width: 131px; margin: 7px 0 0 2px; }
.dock-tabs { display: flex; height: 29px; overflow: hidden; padding-left: 6px; gap: 3px; }
.dock-tabs a { width: 76px; height: 29px; display: flex; align-items: center; gap: 2px; padding-left: 9px; background: #fff; border: 1px solid #ccc; border-top: 0; border-radius: 0 0 16px 16px; white-space: nowrap; font-size: 16px; }
.dock-tabs svg { width: 19px; height: 19px; }
.selected { flex: 1; display: flex; flex-direction: column; }
.sel-list { height: 177px; background: #fff; border: 1px solid #828790; }
.count { font: 14px/18px var(--dlg); color: #111; padding: 12px 7px; }

.canvas { flex: 1; min-width: 0; height: 649px; margin-top: 8px; border: 2px solid #787878; border-width: 3px 0 2px 2px; border-bottom-color: #eee; overflow: hidden; }
.canvas svg { width: 100%; height: 644px; }
.pad { fill: none; stroke: #bfa72a; stroke-width: 1px; shape-rendering: crispEdges; }

/* bottom output */
.output { flex: 1; display: flex; }
.messages { width: 1289px; flex: none; display: flex; flex-direction: column; border-right: 2px solid #b4b4b4; }
.plain { padding: 10px 6px 7px; }
.log { flex: 1; margin-right: 7px; display: flex; justify-content: space-between; background: #fff; border: 1px solid #a0a0a0; border-width: 1px 2px 0 1px; overflow: hidden; }
.log pre { font: 15px/15px "DejaVu Sans Mono", monospace; color: #111; padding-top: 1px; }
.track { width: 22px; background: var(--face); }
.errors { flex: 1; min-width: 0; display: flex; flex-direction: column; }
.outbar { height: 38px; flex: none; background: #f8f8f8; border-bottom: 2px solid #b9b9b9; display: flex; align-items: center; overflow: hidden; padding-bottom: 3px; font-size: 16px; white-space: nowrap; }
.outbar > * { flex: none; }
.outbar button { margin: 0 0 0 12px; }
.outbar button svg { width: 22px; height: 22px; }
.outbar .warn { width: 34px; height: 28px; margin: 0 0 0 66px; border: 1px solid #aaa; border-radius: 4px; background: #ddd; display: grid; place-items: center; }
.outbar .vline { width: 1px; height: 28px; background: #ccc; margin: 0 10px 0 7px; }
.combo { position: relative; display: block; flex: none; }
.combo select { appearance: none; width: 100%; height: 100%; background: #fdfdfd; border: 1px solid #ccc; border-radius: 4px; padding: 0 4px; font: inherit; color: #111; }
.outbar .combo { width: 385px; height: 30px; margin-left: 16px; }
.outbar .combo + .vline { margin: 0; margin-left: 12px; }
.outbar .combo svg { position: absolute; right: 5px; top: 13px; width: 8px; height: 6px; }
.outbody { flex: 1; background: #fff; }

/* dialog window */
.dialog { position: absolute; left: 213px; top: 267px; width: 1151px; border: 1px solid #867238; border-radius: 11px; background: var(--face); box-shadow: 0 30px 60px rgba(0, 0, 0, .34), 0 4px 24px rgba(0, 0, 0, .2); font: 14px/18px var(--dlg); color: #111; overflow: hidden; }
.dialog > header { height: 42px; display: flex; align-items: center; gap: 9px; padding: 0 15px 2px 12px; background: #eef3fa; }
.dialog > header svg { width: 19px; height: 16px; }
.dialog > header h2 { font-size: 15px; flex: 1; color: #111; }
.dialog > header button svg { width: 14px; height: 14px; }
.cols { display: flex; gap: 23px; padding: 1px 8px 8px 15px; }
.left { width: 583px; padding-top: 2px; }
.left > .lab { display: block; }
.part { width: 570px; height: 28px; margin: 9px 0 15px; }
.part svg { position: absolute; right: 5px; top: 11px; width: 13px; height: 8px; }
.refs { width: 570px; height: 102px; margin: 5px 0 18px; }
.list .sel { background: var(--blue); color: #fff; }
.nets { padding: 12px 12px 15px; }
.checks { display: flex; gap: 15px; font-size: 13px; }
.dialog label { display: flex; align-items: center; gap: 3px; white-space: nowrap; }
.dialog .off { color: #8d8d8d; }
input[type=checkbox], input[type=radio] { appearance: none; width: 17px; height: 17px; margin: 0; flex: none; border: 1px solid #666; border-radius: 4px; background: #f4f4f4; display: grid; place-items: center; }
input:disabled { border-color: #ccc; background: #fafafa; }
input[type=checkbox]:checked { background: #005fb8; border-color: #005fb8; }
input[type=checkbox]:checked::before { content: ""; width: 8px; height: 4px; border: solid #cfe4f8; border-width: 0 0 1px 1px; transform: translateY(-1px) rotate(-45deg); }
input[type=radio] { border-radius: 50%; }
input[type=radio]:checked { border: 5px solid #005fb8; background: #fff; }
.nets-body { display: flex; gap: 47px; padding-top: 12px; }
.netbox { width: 396px; height: 476px; border: 1px solid #828790; background: #fff; display: flex; justify-content: space-between; overflow: hidden; }
.netlist { width: 368px; height: 476px; margin: 3px 0 0 3px; display: grid; grid-template-rows: repeat(21, 1fr); }
.netlist label { gap: 2px; }
.netlist span { flex: 1; }
.netlist .red { color: #d2101c; }
.netlist .red input { border-top: 2px solid #3a78b0; }
.netlist .sel span { background: var(--blue); color: #fff; line-height: 23px; }
.scroll { width: 23px; background: var(--face); }
.scroll i { display: block; width: 2px; height: 222px; margin: 24px 0 0 10px; background: #8a8a8a; }
.modes { display: flex; flex-direction: column; gap: 11px; padding-top: 13px; width: 113px; }
.modes .btn:disabled { margin-bottom: 4px; height: 26px; }
.modes label { margin: 0 0 1px -8px; }
.modes .second { margin: 55px 0 2px -8px; }
.options label, .cells { height: 27px; }
.options { padding: 3px 11px 0; height: 218px; }
.right { width: 521px; display: flex; flex-direction: column; }
.cells { display: flex; align-items: center; height: 34px; padding-left: 56px; }
.cells input { width: 37px; height: 25px; border: 1px solid #fafafa; background: #f1f1f1; margin: 0 30px 0 29px; }
.groups { margin-top: 12px; padding: 13px 12px 13px 11px; }
.groups .list { height: 395px; }
.actions { display: grid; grid-template-columns: 158px 158px; gap: 15px 95px; padding: 14px 0 0 12px; }
.close { width: 120px; align-self: flex-end; margin: 11px 10px 0 0; }
.grip { position: absolute; right: 0; bottom: 0; width: 14px; height: 14px; }

/* markup drawn over the window */
.notes { position: absolute; left: 0; top: 0; pointer-events: none; }
.callout { position: absolute; left: 1570px; top: 812px; font: bold 41px/60px "Noto Sans", "Noto Sans CJK SC", sans-serif; color: #ed1c24; pointer-events: none; }
```
